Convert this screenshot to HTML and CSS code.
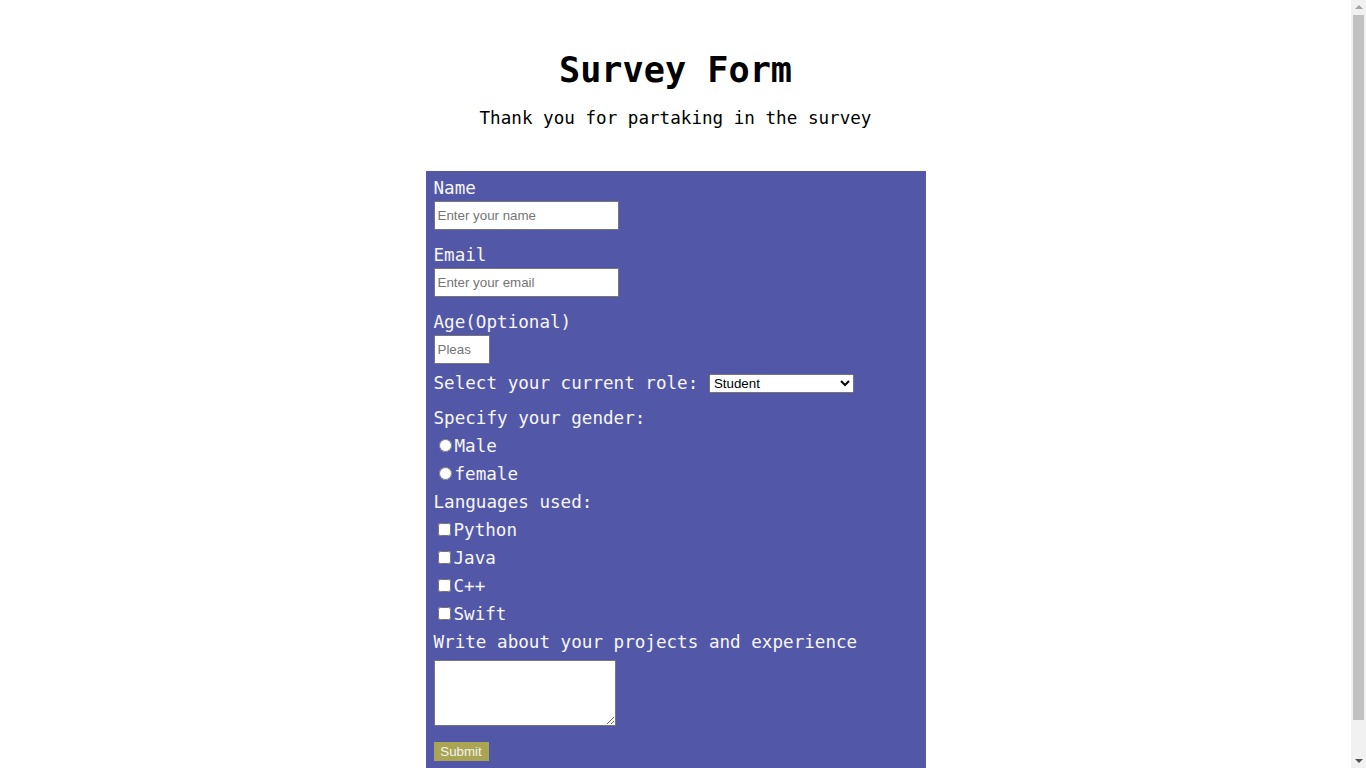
FILE: index.html
```html
<!DOCTYPE html>
<html lang="en">
<head>
<meta charset="utf-8">
<title>Survey Form</title>
<link rel="stylesheet" href="styles.css">
</head>
<body>
<header class="header">
  <h1 class="title">Survey Form</h1>
  <p class="description">Thank you for partaking in the survey</p>
</header>
<form class="survey">
  <div class="group">
    <label class="field-label" for="name">Name</label>
    <input class="text-input" id="name" type="text" placeholder="Enter your name">
  </div>
  <div class="group">
    <label class="field-label" for="email">Email</label>
    <input class="text-input" id="email" type="email" placeholder="Enter your email">
  </div>
  <div class="group group-age">
    <label class="field-label" for="age">Age(Optional)</label>
    <input class="text-input age-input" id="age" type="number" placeholder="Please enter your age">
  </div>
  <div class="row">
    <label class="inline-label" for="role">Select your current role:</label> <select class="role-select" id="role">
      <option>Student</option>
      <option>Full Time Job</option>
      <option>Full Time Learner</option>
      <option>Prefer not to say</option>
      <option>Other</option>
    </select>
  </div>
  <div class="line gap-top">Specify your gender:</div>
  <label class="line"><input type="radio" name="gender">Male</label>
  <label class="line"><input type="radio" name="gender">female</label>
  <div class="line">Languages used:</div>
  <label class="line"><input type="checkbox">Python</label>
  <label class="line"><input type="checkbox">Java</label>
  <label class="line"><input type="checkbox">C++</label>
  <label class="line"><input type="checkbox">Swift</label>
  <label class="line" for="about">Write about your projects and experience</label>
  <textarea class="about" id="about"></textarea>
  <button class="submit" type="submit">Submit</button>
</form>
<div class="scrollbar" aria-hidden="true">
  <span class="arrow arrow-up"></span>
  <span class="thumb"></span>
  <span class="arrow arrow-down"></span>
</div>
</body>
</html>
```
FILE: styles.css
```css
html, body {
  margin: 0;
  padding: 0;
  background: #fff;
}

body {
  font-family: "DejaVu Sans Mono", monospace;
  color: #000;
  padding-right: 15px;
}

.header {
  padding-top: 49px;
  text-align: center;
}

.title {
  margin: 0;
  font-size: 35.2px;
  line-height: 41px;
  font-weight: bold;
}

.description {
  margin: 18px 0 0;
  font-size: 17.6px;
  line-height: 21px;
}

.survey {
  width: 500px;
  box-sizing: border-box;
  margin: 42px auto 8px;
  padding: 4px 8px 35px;
  background: #5357a7;
  color: #f7f7f7;
  font-size: 17.6px;
}

.group {
  margin-bottom: 12px;
}

.group-age {
  margin-bottom: 5px;
}

.field-label {
  display: block;
  line-height: 26px;
}

.text-input {
  display: block;
  box-sizing: border-box;
  width: 185px;
  height: 29px;
  margin: 0;
  padding: 0 3px;
  font-family: "Liberation Sans", Arial, sans-serif;
  font-size: 13.33px;
  border: 1px solid #767676;
  background: #fff;
}

.age-input {
  width: 56px;
}

.row {
  line-height: 28px;
}

.role-select {
  width: 145px;
  height: 19px;
  vertical-align: 1px;
  font-family: "Liberation Sans", Arial, sans-serif;
  font-size: 13.33px;
}

.line {
  display: block;
  line-height: 28px;
}

.gap-top {
  margin-top: 7px;
}

.about {
  display: block;
  box-sizing: border-box;
  width: 182px;
  height: 66px;
  margin: 4px 0 0;
  border: 1px solid #767676;
}

.submit {
  display: block;
  box-sizing: border-box;
  width: 55px;
  height: 19px;
  margin-top: 16px;
  padding: 0;
  border: none;
  background: #aaa552;
  color: #f2f2f2;
  font-family: "Liberation Sans", Arial, sans-serif;
  font-size: 13.33px;
}

.scrollbar {
  position: fixed;
  top: 0;
  right: 0;
  width: 15px;
  height: 100vh;
  background: #f1f1f1;
  display: flex;
  flex-direction: column;
  align-items: center;
}

.arrow {
  width: 0;
  height: 0;
  box-sizing: border-box;
}

.arrow-up {
  border-left: 4px solid transparent;
  border-right: 4px solid transparent;
  border-bottom: 4px solid #a3a3a3;
  margin-top: 5px;
  flex: 0 0 4px;
  margin-bottom: 6px;
}

.thumb {
  flex: 0 0 705px;
  width: 11px;
  background: #c1c1c1;
}

.arrow-down {
  border-left: 4px solid transparent;
  border-right: 4px solid transparent;
  border-top: 4px solid #505050;
  flex: 0 0 4px;
  margin-top: auto;
  margin-bottom: 5px;
}
```
